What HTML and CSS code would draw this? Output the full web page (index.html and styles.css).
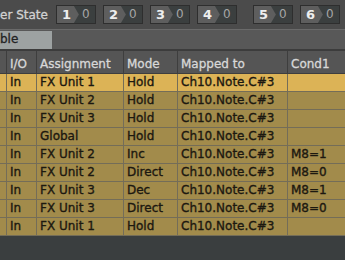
FILE: index.html
```html
<!DOCTYPE html>
<html lang="en">
<head>
  <meta charset="UTF-8">
  <meta name="viewport" content="width=device-width, initial-scale=1.0">
  <title>Controller Mappings</title>
  <link rel="stylesheet" href="styles.css">
</head>
<body>
  <!-- controller state slots -->
  <div class="state-bar">
    <span class="state-label">er State</span>
    <div class="slots">
      <div class="slot"><span class="num">1</span><span class="val">0</span></div>
      <div class="slot"><span class="num">2</span><span class="val">0</span></div>
      <div class="slot"><span class="num">3</span><span class="val">0</span></div>
      <div class="slot"><span class="num">4</span><span class="val">0</span></div>
    </div>
    <div class="slots group2">
      <div class="slot"><span class="num">5</span><span class="val">0</span></div>
      <div class="slot"><span class="num">6</span><span class="val">0</span></div>
    </div>
  </div>

  <div class="tab-bar">
    <div class="tab">ble</div>
  </div>

  <div class="grid">
    <div class="row head">
      <div class="cell"></div>
      <div class="cell">I/O</div>
      <div class="cell">Assignment</div>
      <div class="cell">Mode</div>
      <div class="cell">Mapped to</div>
      <div class="cell">Cond1</div>
    </div>
    <div class="row selected">
      <div class="cell"></div><div class="cell">In</div><div class="cell">FX Unit 1</div>
      <div class="cell">Hold</div><div class="cell">Ch10.Note.C#3</div><div class="cell"></div>
    </div>
    <div class="row">
      <div class="cell"></div><div class="cell">In</div><div class="cell">FX Unit 2</div>
      <div class="cell">Hold</div><div class="cell">Ch10.Note.C#3</div><div class="cell"></div>
    </div>
    <div class="row">
      <div class="cell"></div><div class="cell">In</div><div class="cell">FX Unit 3</div>
      <div class="cell">Hold</div><div class="cell">Ch10.Note.C#3</div><div class="cell"></div>
    </div>
    <div class="row">
      <div class="cell"></div><div class="cell">In</div><div class="cell">Global</div>
      <div class="cell">Hold</div><div class="cell">Ch10.Note.C#3</div><div class="cell"></div>
    </div>
    <div class="row">
      <div class="cell"></div><div class="cell">In</div><div class="cell">FX Unit 2</div>
      <div class="cell">Inc</div><div class="cell">Ch10.Note.C#3</div><div class="cell">M8=1</div>
    </div>
    <div class="row">
      <div class="cell"></div><div class="cell">In</div><div class="cell">FX Unit 2</div>
      <div class="cell">Direct</div><div class="cell">Ch10.Note.C#3</div><div class="cell">M8=0</div>
    </div>
    <div class="row">
      <div class="cell"></div><div class="cell">In</div><div class="cell">FX Unit 3</div>
      <div class="cell">Dec</div><div class="cell">Ch10.Note.C#3</div><div class="cell">M8=1</div>
    </div>
    <div class="row">
      <div class="cell"></div><div class="cell">In</div><div class="cell">FX Unit 3</div>
      <div class="cell">Direct</div><div class="cell">Ch10.Note.C#3</div><div class="cell">M8=0</div>
    </div>
    <div class="row">
      <div class="cell"></div><div class="cell">In</div><div class="cell">FX Unit 1</div>
      <div class="cell">Hold</div><div class="cell">Ch10.Note.C#3</div><div class="cell"></div>
    </div>
  </div>
</body>
</html>
```

FILE: styles.css
```css
body {
  font-family: "DejaVu Sans", sans-serif;
  font-size: 12px;
  margin: 0;
  width: 345px;
  height: 260px;
  overflow: hidden;
  background-color: #3a3e3f;
}
.state-bar {
  display: flex;
  align-items: center;
  height: 29px;
  background-color: #4b4b4b;
  border-bottom: 1px solid #6a6a6a;
  white-space: nowrap;
  overflow: hidden;
}
.state-label {
  color: #d2d2d2;
  margin-right: 8px;
  -webkit-text-stroke: 0.3px #d2d2d2;
}
.slots {
  display: flex;
  gap: 7px;
}
.group2 {
  margin-left: 16px;
}
.slot {
  display: flex;
  width: 38px;
  height: 17px;
  border: 1px solid #2e2e2e;
  background-color: #3b3f3f;
  flex-shrink: 0;
}
.num {
  width: 22px;
  background-color: #5e5e5e;
  color: #eeeeee;
  font-size: 13px;
  font-weight: bold;
  line-height: 17px;
  padding-left: 5px;
  box-sizing: border-box;
  clip-path: polygon(0 0, 17px 0, 22px 50%, 17px 100%, 0 100%);
}
.val {
  color: #a6a6a6;
  line-height: 17px;
  padding-left: 3px;
}
.tab-bar {
  height: 18px;
  background-color: #585858;
  border-bottom: 2px solid #3c3c3c;
  display: flex;
  align-items: stretch;
  padding-top: 1px;
}
.tab {
  width: 52px;
  background-color: #9da2a2;
  color: #222222;
  line-height: 17px;
  -webkit-text-stroke: 0.3px #222222;
}
.row {
  display: grid;
  grid-template-columns: 7px 30px 87px 54px 110px 1fr;
  height: 18px;
  border-bottom: 1px solid #746d58;
  background-color: #a28b4b;
  color: #1c1810;
  box-sizing: border-box;
  -webkit-text-stroke: 0.35px #1c1810;
}
.row.selected {
  background-color: #dcb356;
}
.row.head {
  height: 23px;
  background-color: #555555;
  color: #d8d8d8;
  border-bottom: 1px solid #3e3e3e;
  -webkit-text-stroke: 0.3px #d8d8d8;
}
.cell {
  border-right: 1px solid #746d58;
  padding-left: 3px;
  line-height: 17px;
  white-space: nowrap;
  overflow: hidden;
}
.cell:last-child {
  border-right: none;
}
.head .cell {
  border-right-color: #3e3e3e;
  padding-top: 5px;
}
```
